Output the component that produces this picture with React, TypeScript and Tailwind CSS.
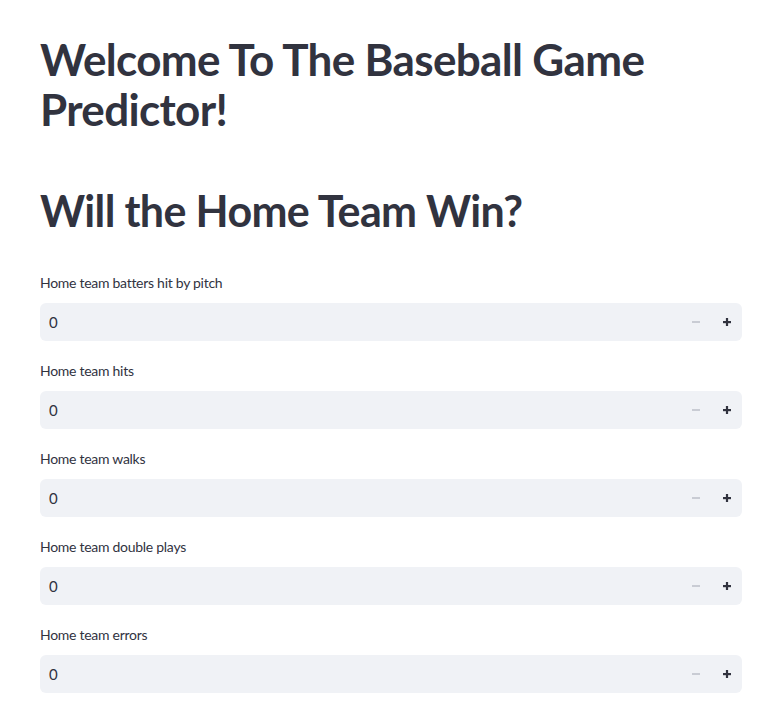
const FIELDS = [
  'Home team batters hit by pitch',
  'Home team hits',
  'Home team walks',
  'Home team double plays',
  'Home team errors',
]

function Minus() {
  return (
    <svg width="10" height="10" viewBox="0 0 10 10" className="text-[#c9ccd4]">
      <rect x="1" y="4" width="8" height="2" fill="currentColor" />
    </svg>
  )
}

function Plus() {
  return (
    <svg width="10" height="10" viewBox="0 0 10 10" className="text-[#31333f]">
      <rect x="1" y="4" width="8" height="2.2" fill="currentColor" />
      <rect x="3.9" y="1" width="2.2" height="8" fill="currentColor" />
    </svg>
  )
}

function NumberField({ label }: { label: string }) {
  return (
    <div className="flex flex-col">
      <label className="mb-[10px] text-[14px] leading-[21px] tracking-[-0.02em] text-[#31333f]">
        {label}
      </label>
      <div className="flex h-[38px] items-center rounded-md bg-[#f0f2f6]">
        <span className="flex-1 pl-[9px] text-[15px] text-[#31333f]">0</span>
        <button className="flex h-full w-8 items-center justify-center">
          <Minus />
        </button>
        <button className="flex h-full w-[30px] items-center justify-center">
          <Plus />
        </button>
      </div>
    </div>
  )
}

export default function App() {
  return (
    <div className="min-h-screen bg-white font-['Lato','Liberation_Sans',sans-serif] text-[#31333f]">
      <div className="pl-10 pr-8 pt-[34px]">
        <h1 className="text-[44px] font-bold leading-[50px] tracking-[-0.015em]">
          Welcome To The Baseball Game Predictor!
        </h1>
        <h2 className="mt-[52px] text-[43px] font-bold leading-[50px] tracking-[-0.015em]">
          Will the Home Team Win?
        </h2>
        <div className="mt-[36px] flex flex-col gap-[19px]">
          {FIELDS.map((f) => (
            <NumberField key={f} label={f} />
          ))}
        </div>
      </div>
    </div>
  )
}
